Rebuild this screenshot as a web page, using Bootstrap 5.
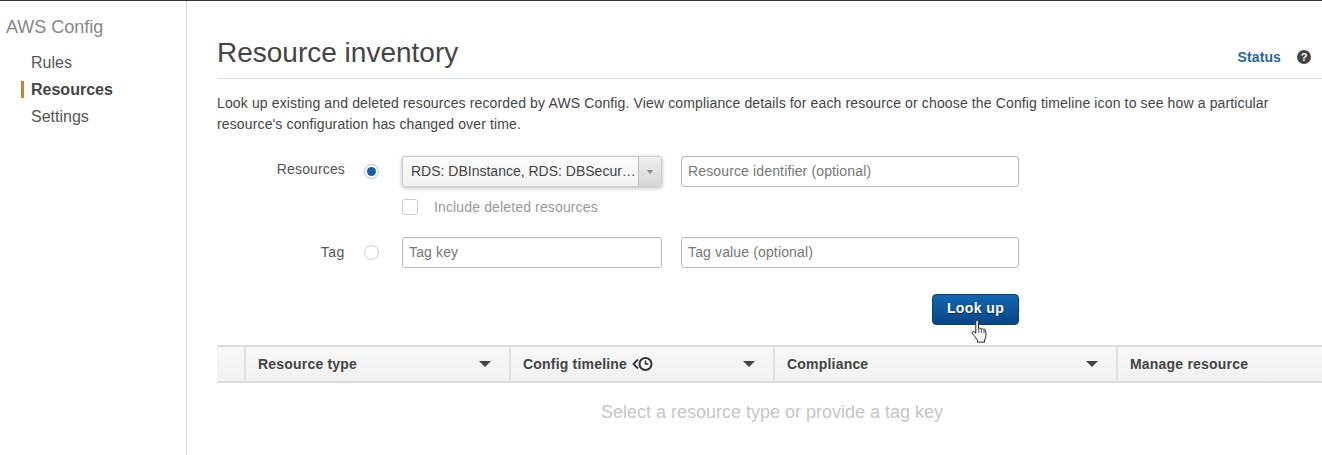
<!DOCTYPE html>
<html lang="en">
<head>
<meta charset="utf-8">
<title>Resource inventory</title>
<link rel="stylesheet" href="https://cdn.jsdelivr.net/npm/bootstrap@5.3.0/dist/css/bootstrap.min.css">
<style>
html,body{height:455px;overflow:hidden}
body{font-family:"Liberation Sans",Arial,sans-serif;font-size:14px;color:#444;background:#fff;border-top:1px solid #333}
.shell{height:454px}
.side{width:187px;flex:none;border-right:1px solid #ddd;padding-top:15px}
.side-title{font-size:18px;line-height:22px;color:#888;padding-left:6px;margin-bottom:11px}
.side-link{display:block;font-size:16px;line-height:27px;color:#555;padding-left:31px;position:relative;text-decoration:none}
.side-link.on{font-weight:700;color:#444}
.side-link.on::before{content:"";position:absolute;left:21px;top:5px;width:3px;height:17px;background:#c58434}
.body-area{flex:1;min-width:0;padding-left:30px}
.head-row{height:78px;border-bottom:1px solid #ddd;padding-top:35px}
.page-title{font-size:28px;line-height:32px;font-weight:400;color:#444;margin:0 0 8px}
.status{font-size:14px;font-weight:700;color:#2a6496;text-decoration:none;line-height:16px;margin-right:16px;letter-spacing:.1px}
.qmark{width:14px;height:14px;border-radius:50%;background:#444;color:#fff;font-size:11px;font-weight:700;line-height:14px;text-align:center;margin-right:11px}
.intro{width:1075px;line-height:21px;margin:14px 0 0;color:#444;letter-spacing:.135px}
.form-area{display:grid;grid-template-columns:128px 57px 260px 357px;column-gap:0;margin-top:21px;align-items:center;letter-spacing:.14px}
.form-area>.mid{grid-column:3}
.lab{text-align:right;color:#555}
.lab-top{position:relative;top:-2px}
.tag-lab{letter-spacing:.6px}
.rad{width:15px;height:15px;border-radius:50%;border:1px solid #ccc;margin-left:19px;background:#fff}
.rad.sel{border-color:#a9c3dd;display:flex;align-items:center;justify-content:center}
.rad.sel::after{content:"";width:9px;height:9px;border-radius:50%;background:#1a5ea8}
.pick{height:31px;border:1px solid #ccc;border-radius:3px;background:linear-gradient(#fbfbfb,#f2f2f2);box-shadow:0 1px 4px rgba(0,0,0,.28);color:#444;overflow:hidden;letter-spacing:0}
.pick-text{padding-left:8px;flex:1;white-space:nowrap;line-height:29px}
.pick-arrow{width:23px;flex:none;border-left:1px solid #bbb;background:linear-gradient(#eee,#d6d6d6);height:100%;display:flex;align-items:center;justify-content:center}
.pick-arrow::after{content:"";border-left:3px solid transparent;border-right:3px solid transparent;border-top:4px solid #888}
.fld{height:31px;border:1px solid #bbb;border-radius:3px;background:#fff;color:#777;padding:0 6px 2px;font-size:14px;box-shadow:inset 0 1px 1px rgba(0,0,0,.05);letter-spacing:.14px}
.fld-a{margin-left:19px}
.fld::placeholder{color:#777;opacity:1}
.chk-row{margin-top:12px;margin-bottom:22px;height:16px;color:#999}
.chk{width:16px;height:16px;border:1px solid #ccc;border-radius:3px;margin-right:16px;background:#fff}
.act-row{margin-top:26px;width:802px}
.go{width:87px;height:31px;padding:0 0 2px;border:1px solid #0b3f7c;border-radius:4px;background:linear-gradient(#1466b1,#0a4587);color:#fff;font-weight:700;font-size:14px;letter-spacing:.4px;text-shadow:0 1px 1px rgba(0,0,0,.5)}
.go-wrap{position:relative;width:87px}
.hand{position:absolute;left:37px;top:25px;width:22px;height:24px}
.grid-head{margin-top:20px;height:38px;border-top:2px solid #ddd;border-bottom:2px solid #ddd;background:linear-gradient(#f9f9f9,#f1f1f1)}
.hc{height:100%;border-right:2px solid #e0e0e0;flex:none;font-weight:700;color:#444;padding-left:12px;padding-right:18px;letter-spacing:.2px}
.hc.c0{width:29px;padding:0}.hc.c1{width:265px}.hc.c2{width:264px}.hc.c3{width:343px}.hc.c4{border:0;flex:1}
.caret-d{border-left:6px solid transparent;border-right:6px solid transparent;border-top:6px solid #444;margin-left:auto}
.tl{width:22px;height:16px;margin-left:5px}
.empty-msg{text-align:center;font-size:18px;color:#c6c6c6;line-height:22px;margin-top:18px;width:1110px}
</style>
</head>
<body>
<div class="shell d-flex">
  <nav class="side">
    <div class="side-title">AWS Config</div>
    <a class="side-link" href="#">Rules</a>
    <a class="side-link on" href="#">Resources</a>
    <a class="side-link" href="#">Settings</a>
  </nav>
  <main class="body-area">
    <div class="head-row d-flex align-items-center justify-content-between">
      <h1 class="page-title">Resource inventory</h1>
      <div class="d-flex align-items-center">
        <a class="status" href="#">Status</a>
        <div class="qmark">?</div>
      </div>
    </div>
    <p class="intro">Look up existing and deleted resources recorded by AWS Config. View compliance details for each resource or choose the Config timeline icon to see how a particular resource's configuration has changed over time.</p>
    <div class="form-area">
      <div class="lab lab-top">Resources</div>
      <div class="rad sel"></div>
      <div class="pick d-flex align-items-center"><span class="pick-text">RDS: DBInstance, RDS: DBSecur…</span><span class="pick-arrow"></span></div>
      <input class="fld fld-a" placeholder="Resource identifier (optional)">
      <div class="mid chk-row d-flex align-items-center"><span class="chk"></span><span>Include deleted resources</span></div>
      <div></div>
      <div class="lab tag-lab">Tag</div>
      <div class="rad"></div>
      <input class="fld" placeholder="Tag key">
      <input class="fld fld-a" placeholder="Tag value (optional)">
    </div>
    <div class="act-row d-flex justify-content-end">
      <div class="go-wrap">
        <button class="go" type="button">Look up</button>
        <svg class="hand" viewBox="0 0 20 24" aria-hidden="true"><path d="M7 1.500c1 0 1.600.7 1.600 1.700v6.400l1-.3c.8-.2 1.400.1 1.700.6.7-.4 1.600-.3 2 .4.8-.3 1.700 0 2 .8.300.9.700 3 .7 5 0 2-.7 3.500-1.500 5v2H7.500v-2c-1-1.300-2.300-3.100-3.500-4.600-.8-1-1.900-2-1.900-3 0-.8 1-1.300 1.800-.8l1.900 1.500V3.200C5.800 2.200 6.200 1.500 7 1.500z" fill="#fff" stroke="#222" stroke-width="1"/><path d="M8.700 10v4M11.300 10v4M14 10.500V14" stroke="#222" stroke-width=".8" fill="none"/></svg>
      </div>
    </div>
    <div class="grid-head d-flex align-items-center">
      <div class="hc c0"></div>
      <div class="hc c1 d-flex align-items-center">Resource type<span class="caret-d"></span></div>
      <div class="hc c2 d-flex align-items-center">Config timeline
        <svg class="tl" viewBox="0 0 22 16" aria-hidden="true"><path d="M6 3.500 1.500 8 6 12.500" fill="none" stroke="#333" stroke-width="1.800"/><circle cx="13.500" cy="8" r="6" fill="#fff" stroke="#333" stroke-width="2"/><path d="M13.500 4.500V8h3" fill="none" stroke="#333" stroke-width="1.600"/></svg>
        <span class="caret-d"></span></div>
      <div class="hc c3 d-flex align-items-center">Compliance<span class="caret-d"></span></div>
      <div class="hc c4 d-flex align-items-center">Manage resource</div>
    </div>
    <div class="empty-msg">Select a resource type or provide a tag key</div>
  </main>
</div>
</body>
</html>
